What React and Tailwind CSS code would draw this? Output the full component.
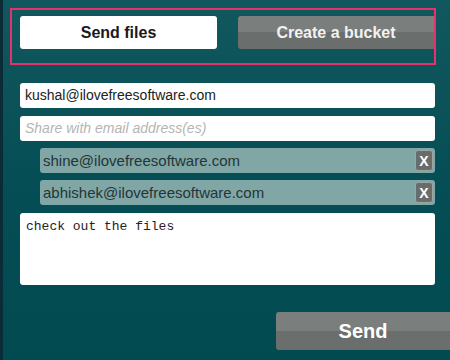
import React from 'react';

const Chip = ({ email }) => (
  <div className="flex items-center justify-between h-[25px] rounded-[3px] bg-[#80a7a6] pl-[3px] pr-[2px]">
    <span className="text-[15px] text-[#253535] font-['Liberation_Sans',sans-serif] leading-none">{email}</span>
    <button className="w-[18px] h-[21px] rounded-[3px] bg-[#686c6b] border border-[#9aa5a4] flex items-center justify-center text-white text-[14px] font-bold font-['Liberation_Sans',sans-serif] leading-none">
      X
    </button>
  </div>
);

export default function App() {
  return (
    <div className="w-[450px] h-[360px] overflow-hidden flex bg-gradient-to-b from-[#11585e] via-[#064e55] to-[#004a50] font-['Liberation_Sans',sans-serif]">
      <div className="w-[3px] h-full bg-[#0b2c36]" />
      <div className="flex-1 flex flex-col">
        {/* tabs */}
        <div className="ml-[7px] mt-[8px] w-[426px] h-[57px] border-[2.5px] border-[#e6316c] flex items-start pt-[6px] pl-[8px] gap-[21px]">
          <button className="w-[197px] h-[33px] rounded-[3px] bg-white text-[#1a1a1a] text-[16px] font-bold">
            Send files
          </button>
          <button className="flex-1 h-[33px] rounded-l-[3px] bg-gradient-to-b from-[#7a7e7d] from-50% to-[#6a6e6d] to-50% text-[#f2f2f2] text-[16px] font-bold">
            Create a bucket
          </button>
        </div>

        {/* form */}
        <div className="ml-[17px] mt-[18px] w-[415px] flex flex-col gap-[8px]">
          <div className="h-[25px] rounded-[3px] bg-white flex items-center px-[5px] text-[14px] text-[#222]">
            kushal@ilovefreesoftware.com
          </div>
          <div className="h-[25px] rounded-[3px] bg-white flex items-center px-[5px] text-[14px] italic text-[#b5b5b5]">
            Share with email address(es)
          </div>
          <div className="ml-[20px] flex flex-col gap-[7px] mt-[-1px]">
            <Chip email="shine@ilovefreesoftware.com" />
            <Chip email="abhishek@ilovefreesoftware.com" />
          </div>
          <div className="h-[72px] rounded-[3px] bg-white px-[6px] py-[6px] text-[13px] text-[#222] font-['Liberation_Mono',monospace] leading-tight">
            check out the files
          </div>
        </div>

        <div className="flex justify-end mt-[27px]">
          <button className="w-[174px] h-[38px] rounded-l-[3px] bg-gradient-to-b from-[#7a7e7d] from-50% to-[#6a6e6d] to-50% text-white text-[20px] font-bold">
            Send
          </button>
        </div>
      </div>
    </div>
  );
}
